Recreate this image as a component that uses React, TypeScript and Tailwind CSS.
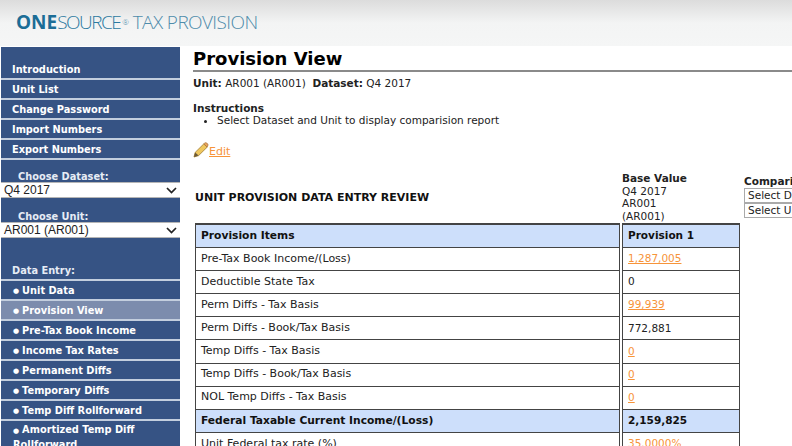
const topLinks = ["Introduction", "Unit List", "Change Password", "Import Numbers", "Export Numbers"];
const entryLinks = [
  "Unit Data",
  "Provision View",
  "Pre-Tax Book Income",
  "Income Tax Rates",
  "Permanent Diffs",
  "Temporary Diffs",
  "Temp Diff Rollforward",
];

const rows = [
  { label: "Provision Items", value: "Provision 1", kind: "head" },
  { label: "Pre-Tax Book Income/(Loss)", value: "1,287,005", kind: "link" },
  { label: "Deductible State Tax", value: "0", kind: "plain" },
  { label: "Perm Diffs - Tax Basis", value: "99,939", kind: "link" },
  { label: "Perm Diffs - Book/Tax Basis", value: "772,881", kind: "plain" },
  { label: "Temp Diffs - Tax Basis", value: "0", kind: "link" },
  { label: "Temp Diffs - Book/Tax Basis", value: "0", kind: "link" },
  { label: "NOL Temp Diffs - Tax Basis", value: "0", kind: "link" },
  { label: "Federal Taxable Current Income/(Loss)", value: "2,159,825", kind: "head" },
  { label: "Unit Federal tax rate (%)", value: "35.0000%", kind: "link" },
];

const Chevron = () => (
  <svg width="11" height="7" viewBox="0 0 11 7" className="mr-[3px]">
    <path d="M1 1l4.5 4.5L10 1" fill="none" stroke="#222" strokeWidth="1.7" />
  </svg>
);

const Pencil = () => (
  <svg width="16" height="16" viewBox="0 0 16 16" className="mb-[1px]">
    <path d="M1 15l1.2-4.6L10.8 1.9l3.4 3.2-8.6 8.5z" fill="#efc75e" stroke="#a98438" strokeWidth="0.9" />
    <path d="M10.8 1.9l1-.9c.6-.5 1.3-.5 1.9 0l1 1c.5.6.5 1.3 0 1.9l-.6 1.2z" fill="#e8a25c" stroke="#a5713a" strokeWidth="0.7" />
    <path d="M1 15l1.2-4.6 3.4 3.2z" fill="#6b5a3a" />
  </svg>
);

const SideSelect = ({ label, value }: { label: string; value: string }) => (
  <div>
    <p className="pl-[17px] pt-[1px] leading-[14px] font-bold text-[#e6ecf5]">{label}</p>
    <div className="-mt-[2px] h-[16px] bg-white border-y border-[#b5b5b5] flex items-center justify-between pl-[3px] text-[#222]">
      <span className="font-['Liberation_Sans',sans-serif] text-[12px] font-normal">{value}</span>
      <Chevron />
    </div>
  </div>
);

export default function App() {
  return (
    <div className="w-[792px] h-[446px] overflow-hidden bg-white font-['DejaVu_Sans',sans-serif] text-[#222]">
      <header className="h-[46px] bg-gradient-to-b from-[#dcdcdc] via-[#f3f4f4] to-[#f5f6f6] pl-[16px] pt-[8px]">
        <p className="font-['Open_Sans',sans-serif] text-[19px] leading-[28px] tracking-[-0.6px] whitespace-nowrap font-light text-[#4f8cab]">
          <span className="font-bold tracking-[0px] text-[#1c6d96]">ONE</span>
          <span className="tracking-[-1.5px] text-[#2c7aa0]">SOURCE</span>
          <sup className="ml-[2px] text-[8px]">®</sup> TAX PROVISION
        </p>
      </header>

      <div className="flex">
        <nav className="ml-[1px] mt-[1px] w-[179px] h-[399px] shrink-0 bg-[#365384] text-white text-[9.8px] font-bold overflow-hidden">
          <div className="pt-[13px]">
            {topLinks.map((link) => (
              <div key={link} className="h-[20px] flex items-center pl-[11px] pt-[2px] border-b-2 border-[#c3cede]">
                {link}
              </div>
            ))}
          </div>
          <div className="mt-[9px] flex flex-col gap-[11px]">
            <SideSelect label="Choose Dataset:" value="Q4 2017" />
            <SideSelect label="Choose Unit:" value="AR001 (AR001)" />
          </div>
          <div className="mt-[23px] h-[20px] pl-[11px] pt-[2px] flex items-center border-b-2 border-[#c3cede] text-[#e6ecf5]">
            Data Entry:
          </div>
          {entryLinks.map((link) => (
            <div
              key={link}
              className={`h-[20px] flex items-center pl-[12px] pt-[2px] border-b-2 border-[#c3cede] ${link === "Provision View" ? "bg-[#7c8cad]" : ""}`}
            >
              <span className="mr-[3px] text-[7px]">●</span>
              {link}
            </div>
          ))}
          <div className="pl-[12px] pt-[2px] leading-[13px]">
            <span className="mr-[3px] text-[7px]">●</span>Amortized Temp Diff
            <br />
            Rollforward
          </div>
        </nav>

        <main className="ml-[13px] flex-1 min-w-0 pt-[2px] overflow-hidden">
          <h1 className="text-[18px] leading-[22px] font-bold text-black border-b-2 border-[#8a8a8a] h-[24px]">
            Provision View
          </h1>
          <p className="mt-[4px] text-[10.5px] leading-[14px] whitespace-nowrap">
            <b>Unit:</b> AR001 (AR001) &nbsp;<b>Dataset:</b> Q4 2017
          </p>
          <p className="mt-[12px] text-[10.5px] leading-[13px] font-bold">Instructions</p>
          <ul className="-mt-[1px] ml-[24px] list-disc text-[10.5px] leading-[12px] whitespace-nowrap">
            <li>Select Dataset and Unit to display comparision report</li>
          </ul>
          <div className="mt-[16px] flex items-end h-[17px]">
            <Pencil />
            <a className="text-[11px] leading-[14px] text-[#f7943a] underline">Edit</a>
          </div>

          <div className="flex mt-[13px] h-[51px] text-[10.5px]">
            <div className="w-[429px] shrink-0 pl-[2px] pt-[18px] text-[11px] font-bold text-[#111] whitespace-nowrap">
              UNIT PROVISION DATA ENTRY REVIEW
            </div>
            <div className="w-[122px] shrink-0 leading-[12.5px]">
              <b>Base Value</b>
              <br />Q4 2017
              <br />AR001
              <br />(AR001)
            </div>
            <div className="shrink-0 pt-[3px] leading-[13px] whitespace-nowrap">
              <b>Comparison</b>
              <div className="w-[100px] h-[15px] border border-[#aaa] pl-[3px] leading-[13px]">Select Dataset</div>
              <div className="w-[100px] h-[15px] border border-[#aaa] pl-[3px] leading-[13px]">Select Unit</div>
            </div>
          </div>

          <div className="ml-[2px] flex gap-[2px] text-[11px]">
            <div className="w-[425px] border-t-2 border-x border-[#444]">
              {rows.map((row) => (
                <div
                  key={row.label}
                  className={`h-[23.1px] flex items-center pl-[5px] border-b-[1.5px] border-[#444] whitespace-nowrap ${row.kind === "head" ? "bg-[#cddffb] font-bold text-[10.7px] text-[#111]" : ""}`}
                >
                  {row.label}
                </div>
              ))}
            </div>
            <div className="w-[118px] border-t-2 border-x border-[#444] text-[10.5px]">
              {rows.map((row) => (
                <div
                  key={row.label}
                  className={`h-[23.1px] flex items-center pl-[5px] border-b-[1.5px] border-[#444] ${row.kind === "head" ? "bg-[#cddffb] font-bold text-[#111]" : ""}`}
                >
                  {row.kind === "link" ? <a className="text-[#f7943a] underline">{row.value}</a> : row.value}
                </div>
              ))}
            </div>
          </div>
        </main>
      </div>
    </div>
  );
}
